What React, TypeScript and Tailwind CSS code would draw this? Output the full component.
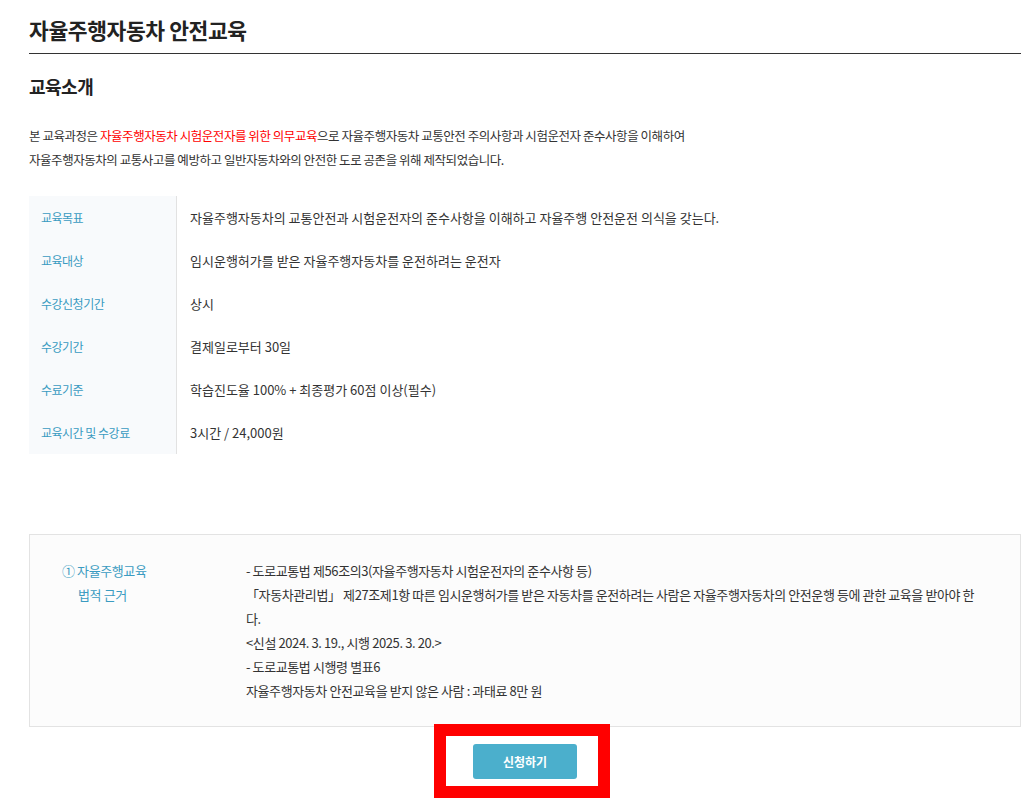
const font = { fontFamily: '"Noto Sans CJK KR", "Noto Sans", sans-serif' };

const rows: [string, string][] = [
  ["교육목표", "자율주행자동차의 교통안전과 시험운전자의 준수사항을 이해하고 자율주행 안전운전 의식을 갖는다."],
  ["교육대상", "임시운행허가를 받은 자율주행자동차를 운전하려는 운전자"],
  ["수강신청기간", "상시"],
  ["수강기간", "결제일로부터 30일"],
  ["수료기준", "학습진도율 100% + 최종평가 60점 이상(필수)"],
  ["교육시간 및 수강료", "3시간 / 24,000원"],
];

const lawLines = [
  "- 도로교통법 제56조의3(자율주행자동차 시험운전자의 준수사항 등)",
  "「자동차관리법」 제27조제1항 따른 임시운행허가를 받은 자동차를 운전하려는 사람은 자율주행자동차의 안전운행 등에 관한 교육을 받아야 한다.",
  "<신설 2024. 3. 19., 시행 2025. 3. 20.>",
  "- 도로교통법 시행령 별표6",
  "자율주행자동차 안전교육을 받지 않은 사람 : 과태료 8만 원",
];

export default function App() {
  return (
    <div className="min-h-[809px] bg-white pl-[29px] pr-[10px] text-[#333]" style={font}>
      <h1 className="pt-[14px] pb-[7px] text-[21.5px] font-bold tracking-[-0.4px] text-[#222]">
        자율주행자동차 안전교육
      </h1>
      <div className="h-[1px] bg-[#333]" />

      <h2 className="mt-[19px] text-[18px] font-bold tracking-[-0.5px] text-[#222]">교육소개</h2>

      <p className="mt-[24px] text-[12.5px] leading-[24px] tracking-[-0.45px] text-[#333]">
        본 교육과정은 <span className="text-[#ff0000]">자율주행자동차 시험운전자를 위한 의무교육</span>으로
        자율주행자동차 교통안전 주의사항과 시험운전자 준수사항을 이해하여
        <br />
        자율주행자동차의 교통사고를 예방하고 일반자동차와의 안전한 도로 공존을 위해 제작되었습니다.
      </p>

      <div className="mt-[24px] flex flex-col">
        {rows.map(([k, v]) => (
          <div key={k} className="flex">
            <div className="flex h-[43px] w-[148px] items-center border-r border-[#e2e2e2] bg-[#f8fafc] pl-[12px] text-[12px] tracking-[-0.5px] text-[#3a9bc1]">
              {k}
            </div>
            <div className="flex h-[43px] flex-1 items-center pl-[13px] text-[13px] text-[#333]">{v}</div>
          </div>
        ))}
      </div>

      <div className="mt-[80px] flex border border-[#e3e3e3] bg-[#fcfcfc] pt-[24px] pb-[23px] text-[13px] leading-[24px] tracking-[-0.4px]">
        <div className="w-[216px] shrink-0 pl-[32px] text-[#3a9bc1]">
          <div>① 자율주행교육</div>
          <div className="pl-[16px]">법적 근거</div>
        </div>
        <div className="w-[736px] text-[#333]">
          {lawLines.map((l) => (
            <div key={l}>{l}</div>
          ))}
        </div>
      </div>

      <div className="flex justify-center">
        <div className="-mt-[3px] mr-[6px] border-[12px] border-[#ff0000] pt-[8px] pr-[21px] pb-[7px] pl-[27px]">
          <button className="h-[35px] w-[104px] rounded-[3px] bg-[#4bafcc] text-[12px] font-bold text-white">
            신청하기
          </button>
        </div>
      </div>
    </div>
  );
}
